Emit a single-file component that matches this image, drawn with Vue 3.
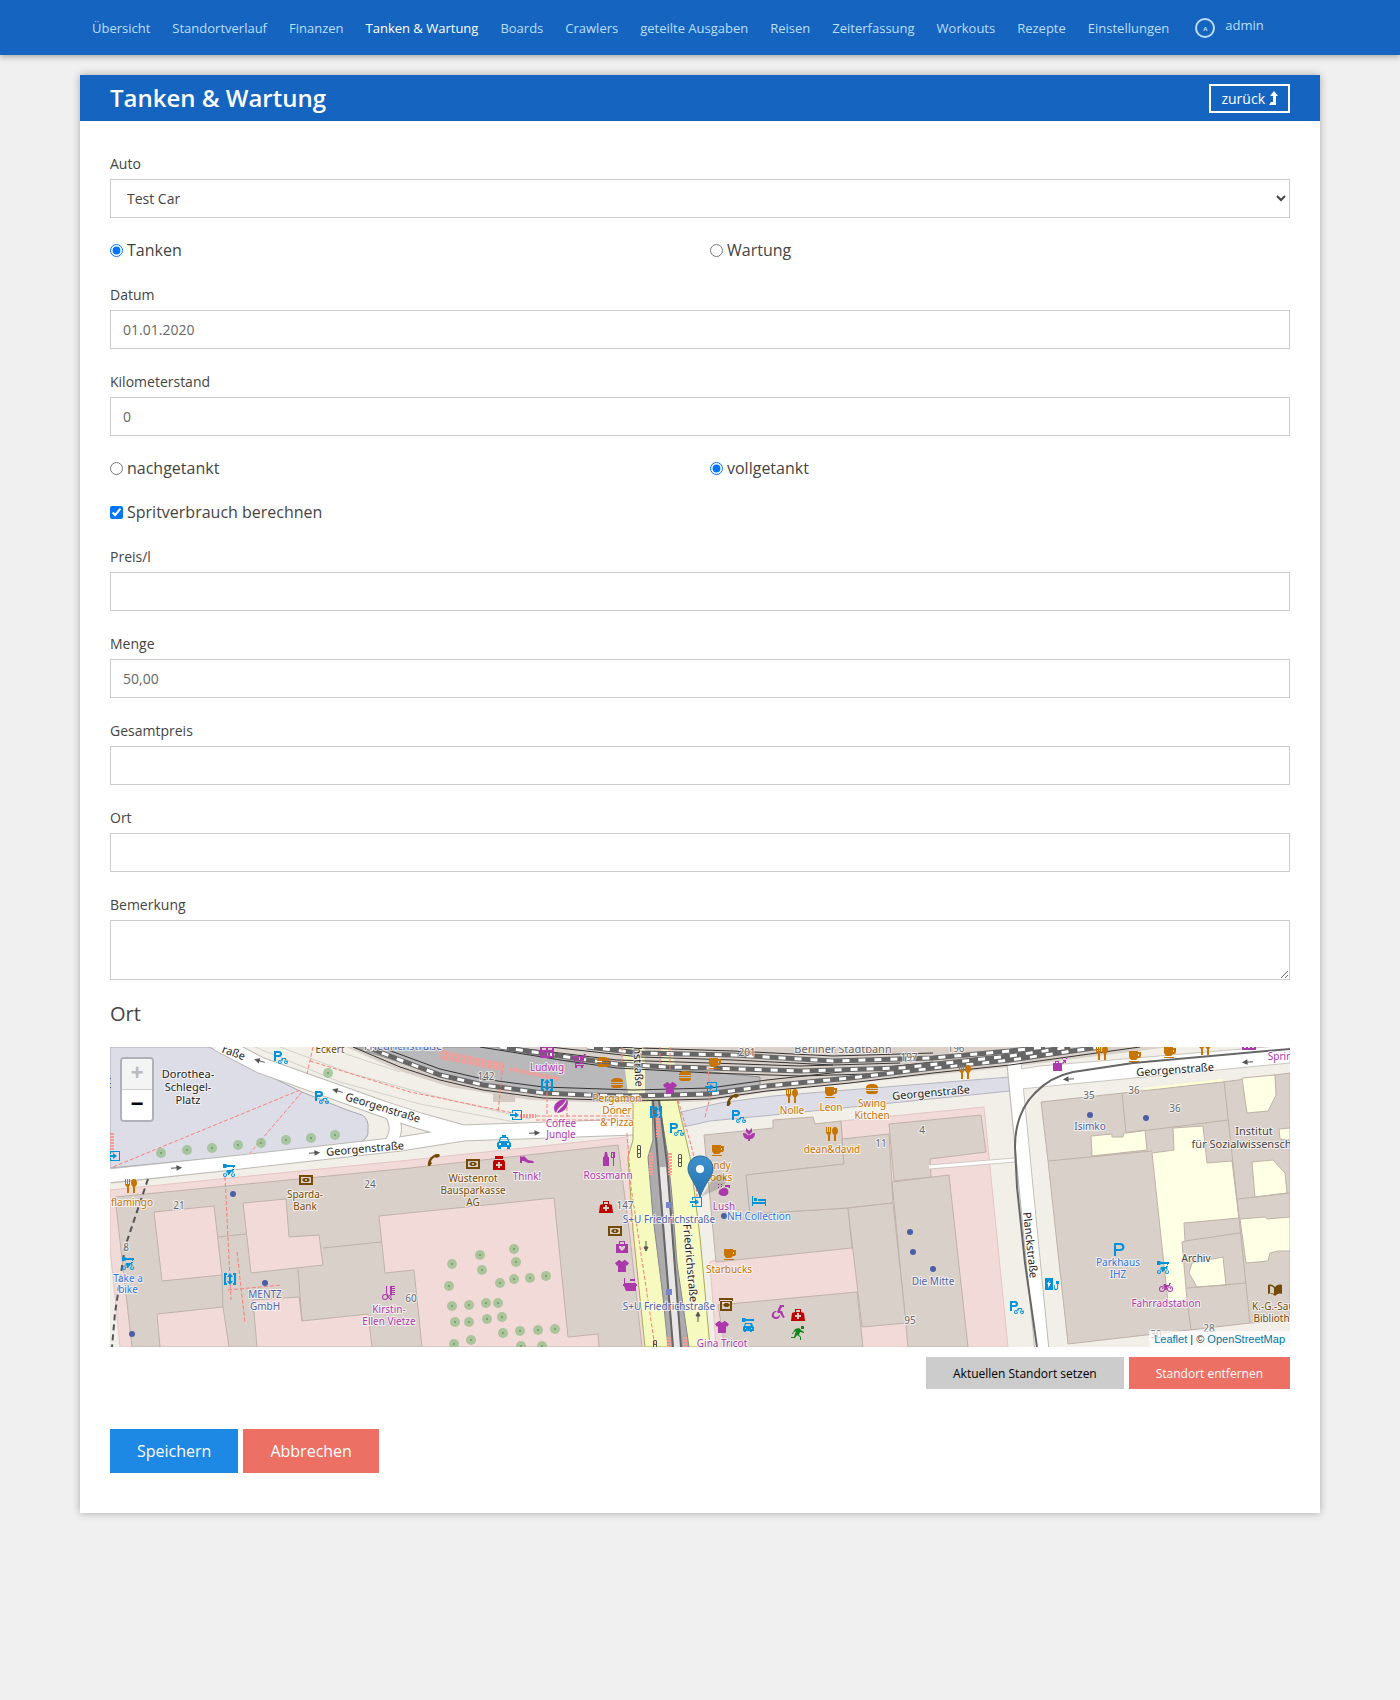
<script setup>
import { reactive } from 'vue'

const navItems = [
  'Übersicht', 'Standortverlauf', 'Finanzen', 'Tanken & Wartung', 'Boards', 'Crawlers', 'geteilte Ausgaben',
  'Reisen', 'Zeiterfassung', 'Workouts', 'Rezepte', 'Einstellungen',
]
const active = 'Tanken & Wartung'

const form = reactive({
  car: 'Test Car', type: 'fuel', date: '01.01.2020', mileage: '0', fill: 'full',
  calc: true, price: '', volume: '50,00', total: '', place: '', notice: '',
})
const topFields = [['date', 'Datum'], ['mileage', 'Kilometerstand']]
const fuelFields = [['price', 'Preis/l'], ['volume', 'Menge'], ['total', 'Gesamtpreis'], ['place', 'Ort']]

// Map palette
const O = '#c77400', S = '#ac39ac', T = '#0092da', H = '#bf0000', B = '#734a08', F = '#4d62a8', L = '#2f73e0', N = '#666', K = '#222'

const ring = (x, y, r) =>
  `M${x - r} ${y}a${r} ${r} 0 1 0 ${2 * r} 0a${r} ${r} 0 1 0 ${-2 * r} 0zM${x - r + 1} ${y}a${r - 1} ${r - 1} 0 1 1 ${2 * r - 2} 0a${r - 1} ${r - 1} 0 1 1 ${2 - 2 * r} 0z`

// Glyphs on a 14 x 14 grid, filled with the even-odd rule
const glyphs = {
  fork: 'M1 0h1v5h1V0h1v5h1V0h1v6l-1 2v6H3V8L1 6zM10 0c2 0 3 2 3 4s-1 3-2 4v6H9V8C8 7 7 6 7 4s1-4 3-4z',
  cup: 'M1 2h9v1h3v4l-1 2h-2l-2 2H3L1 8zM10 5v2h1V5zM1 12h10v1H1z',
  burger: 'M1 6c0-3 2-4 6-4s6 1 6 4zM1 7h12v1H1zM1 9h12c0 2-1 3-3 3H4c-2 0-3-1-3-3z',
  phone: 'M9 1l3 0 1 2-3 2-2-1C6 5 4 7 4 9l1 1-2 3-2 0C0 9 3 3 9 1z',
  bank: 'M0 2h14v10H0zM2 4v6h10V4zM3 7l2-2h4l2 2-2 2H5zM7 6a1 1 0 1 0 0 2a1 1 0 1 0 0-2z',
  atm: 'M0 0h14v3h-1V2H1v1H0zM1 3h12v10H1zM3 4v7h8V4zM4 7l2-2h3l2 2-2 2H6z',
  parkbike: 'M0 0h5c4 0 4 6 0 6H2v4H0zM2 2v2h3c1 0 1-2 0-2zM6 11l2-4h4v1l1 3h-1l-1-3H9l-1 3z' + ring(6, 11, 2) + ring(12, 11, 2),
  bike: 'M3 9l2-5h2v1l3 0V3h2v1h-1l1 5h-1l-1-3-3 4H6L5 6 4 9z' + ring(3, 9, 3) + ring(11, 9, 3),
  sharebike: 'M1 0h3l1 1h8v2h-1v1h-1V3H5L4 4H1zM3 10l2-4h5V5h2v1h-1l1 4h-1l-1-3-3 4H6L5 7l-1 3z' + ring(3, 11, 2) + ring(11, 11, 2),
  lift: 'M1 1h3v2H3v8h1v2H1zM13 1h-3v2h1v8h-1v2h3zM7 1l3 4H8v4h2l-3 4-3-4h2V5H4z',
  entrance: 'M3 2h10v10H3v-3h1v2h8V3H4v2H3zM6 4l4 3-4 3V8H1V6h5z',
  taxi: 'M5 0h4v2h2l1 4 2 2v4h-1v2h-3v-2H4v2H1v-2H0V8l2-2 1-4h2zM4 3L3 6h8l-1-3zM2 8v2h2V8zM10 8v2h2V8z',
  pharmacy: 'M3 0h8v3H3zM2 4h10l1 2v8H1V6zM6 6v2H4v2h2v2h2v-2h2V8H8V6z',
  shoe: 'M0 3l2 1 2-1 4 4 5 1 1 2H8L4 8 2 8v2H0z',
  cosmetics: 'M3 0h2l1 5h1v9H1V5h1zM9 0h4v6h-1v8h-1V6H9zM10 1v4h1V1z',
  hair: 'M8 0h5v1h-3v1h3v1h-3v1h3v1h-3v1h3v1h-3v1h3v1h-3v5H8zM4 0h1v7l2 3H6L4 7z' + ring(3, 11, 3) + ring(8, 11, 2),
  aid: 'M4 1h6v3l3 1 1 8H0L1 5l3-1zM5 2v2h4V2zM6 5v2H4v2h2v2h2V9h2V7H8V5z',
  shirt: 'M4 1h1c1 2 3 2 4 0h1l4 3-2 3-1-1v7H3V6L2 7 0 4z',
  gift: 'M4 4V1h6v3h3v9H1V4zM5 4h4V2H5zM7 11L4 8V6h2l1 1 1-1h2v2z',
  pot: 'M1 0h1v5h11v1h1v2h-1v5H3L1 8H0V6h1zM7 1h5v2H7z',
  bean: 'M13 0c3 5-2 14-10 14C6 8 11 8 13 0zM12 0C6 0 0 4 0 9c0 2 1 4 2 5C4 7 10 7 12 0z',
  flower: 'M4 1l3 3 3-3v4l-3 3-3-3zM1 6c3 0 5 1 5 4V7h2v3c0-3 2-4 5-4 0 4-2 6-5 6v2H6v-2C3 12 1 10 1 6z',
  bed: 'M0 2h1v6h12V5h1v7h-1v-2H1v2H0zM2 4h3v3H2zM6 5h7v2H6z',
  carshare: 'M1 0h3l1 1h8v2H5L4 4H1zM4 5h7l1 3 1 1v4h-2v1H9v-1H5v1H3v-1H2V9l1-1zM5 6L4 8h6l-1-2zM4 10v1h1v-1zM10 10v1h1v-1z',
  wheelchair: 'M9 0h4v2h-2L9 6h2l2 5 1 1-2 1-3-5H7L6 7l2-5zM4 6h2L5 7c-3 1-3 5 0 5 2 0 3-1 3-2h1c0 3-2 4-4 4C0 14-1 8 4 6z',
  run: 'M10 0h3v3h-3zM4 3l4-1 2 2 3 2v1l-4-1-1 3 2 2v3H9v-3L6 9l-2 3H0v-1h3l2-6-2 1-1 2H1z',
  charge: 'M0 1h8v12H0zM5 3L2 7h1v4l3-5H4zM9 8c2 0 0 4 2 4s1-4 1-5h-1V4h3v3h-1c0 2 1 6-2 6-3 1-1-4-2-4z',
  book: 'M0 2c3-1 5 0 7 2 2-2 4-3 7-2v9c-3-1-5 0-7 2-2-2-4-3-7-2zM2 3v7c2 0 3 0 4 1V5C5 4 4 3 2 3z',
  parking: 'M2 1h6c6 0 6 8 0 8H4v5H2zM4 3v4h4c3 0 3-4 0-4z',
  lights: 'M5 1l1-1h2l1 1v11l-1 1H6l-1-1zM6 1v3h2V1zM6 5v3h2V5zM6 9v3h2V9z',
  store: 'M0 1h14v12H0zM2 3v2h4V3zM8 3v2h4V3zM2 7v4h2V7zM6 7v4h2V7zM10 7v4h2V7z',
  cart: 'M14 0v1h-1l-2 9H4v1h8v1H3V9h7V7H2L0 2h11l1-2zM3 3l1 3h1V3zM7 3v3h1V3zM3 12h2v2H3zM9 12h2v2H9z',
  bag: 'M2 5V3h4v2h3v8H0V5zM3 4v1h2V4zM10 2h3v3h-1V4l-2 2-1-1 2-2h-1zM9 0h1v1H9zM13 0h1v1h-1z',
  lush: 'M6 5c6-2 8 8 1 8S0 7 6 5zM8 2h5v3h-1l-1-1H8zM1 1h1v1H1zM4 1h1v1H4zM1 4h1v1H1zM4 3h1v1H4z',
  swing: 'M0 12h10v1H0zM1 3h9v1H7v4h3v1H6V4H3v5h4v1H2V4H1z',
}

const icons = [
  ['swing', -2, 35, '#4863e0'], ['entrance', 4, 109, T], ['parkbike', 171, 11, T], ['parkbike', 212, 51, T], ['fork', 21, 139, O],
  ['sharebike', 119, 124, T], ['bank', 196, 133, B], ['sharebike', 18, 217, T], ['lift', 120, 232, T], ['hair', 279, 246, S],
  ['store', 437, 5, S], ['cart', 469, 14, S], ['burger', 493, 15, O], ['burger', 507, 36, O], ['burger', 575, 29, O], ['shirt', 560, 41, S],
  ['lift', 437, 38, T], ['bean', 451, 59, S], ['entrance', 406, 68, T], ['taxi', 394, 95, T], ['phone', 324, 113, B],
  ['bank', 363, 117, B], ['pharmacy', 389, 116, H], ['shoe', 417, 113, S], ['cosmetics', 499, 112, S], ['aid', 496, 160, H],
  ['bank', 505, 184, B], ['gift', 512, 200, S], ['shirt', 512, 219, S], ['pot', 520, 238, S], ['lift', 546, 65, T],
  ['parkbike', 567, 83, T], ['lights', 529, 105, '#555'], ['lights', 570, 114, '#555'], ['lights', 545, 300, '#555'], ['entrance', 586, 155, T],
  ['cup', 605, 16, O], ['entrance', 601, 40, T], ['phone', 623, 53, B], ['fork', 682, 49, O], ['cup', 721, 45, O], ['burger', 762, 42, O],
  ['fork', 855, 25, O], ['parkbike', 629, 70, T], ['flower', 639, 87, S], ['cup', 608, 103, O], ['fork', 722, 87, O],
  ['lush', 614, 143, S], ['bed', 649, 154, T], ['cup', 620, 207, O], ['atm', 616, 258, B], ['shirt', 612, 280, S],
  ['carshare', 638, 278, T], ['wheelchair', 668, 265, S], ['aid', 688, 268, H], ['run', 688, 286, '#0d8517'],
  ['bag', 950, 18, S], ['fork', 992, 6, O], ['cup', 1025, 9, O], ['cup', 1060, 5, O], ['fork', 1095, 1, O], ['store', 1139, -3, S],
  ['parking', 1009, 202, T], ['sharebike', 1053, 221, T], ['bike', 1056, 240, S], ['charge', 942, 237, T], ['parkbike', 907, 261, T],
  ['book', 1165, 243, B],
]

// [text, x, y, colour, size, rotation]
const labels = [
  ['Dorothea-', 78, 26, K, 11], ['Schlegel-', 78, 39, K, 11], ['Platz', 78, 52, K, 11],
  ['raße', 124, 5, K, 11, 20], ['Georgenstraße', 273, 60, K, 11, 17], ['Georgenstraße', 255, 101, K, 11, -5],
  ['Eckert', 220, 2, B], ['Friedrichstraße', 293, -2, F, 11], ['flamingo', 22, 155, O], ['Sparda-', 195, 147, B], ['Bank', 195, 159, B],
  ['24', 260, 137, N], ['21', 69, 158, N], ['8', 16, 200, N], ['Take a', 18, 231, L], ['bike', 18, 242, L],
  ['MENTZ', 155, 247, F], ['GmbH', 155, 259, F], ['Kirstin-', 279, 262, S], ['Ellen Vietze', 279, 274, S], ['60', 301, 251, N],
  ['Ludwig', 437, 20, S], ['142', 376, 29, N], ['Coffee', 451, 76, S], ['Jungle', 451, 87, S],
  ['Pergamon', 507, 51, O], ['Döner', 507, 63, O], ['& Pizza', 507, 75, O],
  ['Wüstenrot', 363, 131, B], ['Bausparkasse', 363, 143, B], ['AG', 363, 155, B], ['Think!', 417, 129, S], ['Rossmann', 498, 128, S],
  ['147', 515, 158, N], ['S+U Friedrichstraße', 559, 172, F], ['S+U Friedrichstraße', 559, 259, F],
  ['Friedrichstraße', 581, 216, K, 11, 85], ['hstraße', 529, 20, K, 11, 87], ['Gina Tricot', 612, 296, S],
  ['201', 637, 5, N], ['Berliner Stadtbahn', 733, 1, N, 11], ['197', 799, 10, N], ['196', 846, 1, N],
  ['Nolle', 682, 63, O], ['Leon', 721, 60, O], ['Swing', 762, 56, O], ['Kitchen', 762, 68, O], ['dean&david', 722, 102, O],
  ['Candy', 606, 118, O], ['Cooks', 608, 130, O], ['Lush', 614, 159, S], ['NH Collection', 649, 169, L], ['Starbucks', 619, 222, O],
  ['4', 812, 83, N], ['11', 771, 96, N], ['95', 800, 273, N], ['Die Mitte', 823, 234, F],
  ['Georgenstraße', 821, 45, K, 11, -5], ['Georgenstraße', 1065, 22, K, 11, -4], ['Planckstraße', 921, 198, K, 11, 84],
  ['35', 979, 48, N], ['36', 1024, 43, N], ['36', 1065, 61, N], ['Isimko', 980, 79, F], ['Institut', 1144, 83, '#444', 11],
  ['für Sozialwissenschaften', 1145, 96, '#444', 11], ['Archiv', 1086, 211, '#444'], ['Parkhaus', 1008, 215, L], ['IHZ', 1008, 227, L],
  ['Fahrradstation', 1056, 256, S], ['28', 1099, 281, N], ['30', 1046, 287, N], ['K.-G.-Saur-', 1167, 259, B], ['Bibliothek', 1167, 271, B],
  ['Springer', 1178, 9, S],
]

const trees = [
  [51, 106], [77, 103], [102, 101], [128, 98], [151, 96], [176, 93], [201, 91], [225, 88], [218, 26],
  [342, 217], [370, 208], [404, 202], [406, 215], [372, 223], [339, 239], [390, 236], [404, 232], [420, 231], [436, 229],
  [342, 259], [359, 258], [376, 256], [388, 256], [345, 275], [359, 275], [377, 272], [392, 270], [393, 286], [410, 284],
  [428, 283], [445, 282], [344, 297], [361, 293], [411, 299], [432, 299],
]
const dots = [[123, 147], [155, 236], [22, 287], [614, 169], [800, 185], [803, 205], [823, 222], [980, 68], [1036, 71]]

const pink = [
  '0,143 300,113 517,90 520,120 523,183 545,300 10,300 0,200',
  '731,74 874,60 898,300 606,300 600,215 738,161',
]
const buildings = [
  '5,150 300,121 508,98 520,190 532,300 22,300',
  '594,88 663,81 663,73 703,70 705,77 731,74 734,117 636,128 640,167 738,161 742,201 606,215',
  '732,92 779,87 783,156 738,161 640,167 636,128 734,117',
  '779,77 871,68 876,105 820,112 821,130 784,134',
  '782,135 839,128 858,300 798,300',
  '738,161 783,156 796,276 752,280',
  '608,258 747,245 753,300 615,300',
  '931,55 1113,35 1180,26 1180,273 1140,276 958,297 938,114',
]
const courts = [
  '44,165 104,159 112,228 52,234', '133,156 176,152 179,190 209,188 213,218 141,226',
  '47,267 113,260 119,300 50,300', '143,253 189,250 192,274 258,267 262,300 147,300',
  '269,169 444,151 458,290 488,287 489,300 312,300 304,223 275,226',
]
const school = [
  '981,89 1002,87 1002,90 1013,90 1014,86 1035,83 1037,103 982,109',
  '1063,81 1093,79 1097,116 1122,114 1129,171 1074,176 1075,194 1072,195 1077,253 1058,255 1042,106 1064,103',
  '1132,31 1165,28 1166,48 1158,64 1137,66', '1142,115 1163,113 1175,126 1177,146 1145,150',
  '1130,172 1155,170 1157,172 1180,170 1180,204 1168,204 1160,206 1158,214 1136,216',
  '1082,216 1113,210 1116,238 1087,240 1079,226', '1169,82 1180,81 1180,93 1170,92',
]
const walls = 'M107 190L136 187M213 201L271 195M188 222L192 274M112 228L113 260M1012 46L1016 86L1118 73M1114 34L1129 171L1140 276M938 114L1042 104M1075 194L1130 186M1077 241L1137 236M1128 152L1180 146M1077 253L1081 283'
const footways = 'M190 43L3 120M192 45L140 106M203 0L197 27M200 14L300 45L403 66M118 243L172 238M115 130L121 253M127 205L135 276M393 18L388 66M426 69H520M426 73H520M437 45V70M457 60V72M517 86L521 140L545 300M568 53L583 105L588 160M595 70L600 50L598 20M512 0V16M530 0V40M550 0V18M560 0V22'
const steps = 'M2 86V106M330 5L393 18M330 10L393 22M400 22L450 32M410 69H426M541 106V128M560 106V128M548 65V90M559 290V300M575 290V300'
const rails = [
  'M257 0L290 13L330 28L373 38L433 46L477 48L523 49L600 47L657 39L740 31L823 21L900 13L990 0',
  'M390 0L457 10L507 17L557 20L600 21L690 24L790 21L900 9L960 0',
  'M477 0L530 6L623 8L723 14L823 11L900 4L935 0',
]
const railEdges = 'M243 0L290 20L330 33L373 43L433 51L523 54L600 52L657 44L740 36L823 26L900 18L1030 0M270 0L330 22L373 32L433 40L523 43L600 41L657 33L823 15M400 0L507 13L600 16L690 19L790 16M370 0L457 14L507 21L600 26L690 29L790 26M500 0L623 4L723 9L823 6M440 0L530 10L623 13L723 18'
// One-way arrows: x, y, rotation
const arrows = [[150, 14, 196], [228, 44, 196], [66, 121, -4], [204, 106, -4], [424, 86, -3], [536, 199, 90], [588, 270, 270], [959, 32, 176], [1138, 15, 176]]
</script>

<template>
  <div class="page">
    <header class="topbar">
      <nav aria-label="Hauptmenü">
        <a v-for="item in navItems" :key="item" href="#" :class="{ active: item === active }">{{ item }}</a>
        <a href="#" class="profile"><span class="avatar">A</span><span class="user">admin</span></a>
      </nav>
    </header>

    <main class="card">
      <header class="card-head">
        <h1>Tanken &amp; Wartung</h1>
        <a href="#" class="back">zurück
          <svg width="9" height="14" viewBox="0 0 9 14" aria-hidden="true"><path d="M5 0l4 5H7v9H0l2-3h2V5H1z" fill="currentColor" /></svg>
        </a>
      </header>

      <form class="body" @submit.prevent>
        <div class="field">
          <label for="car">Auto</label>
          <select id="car" v-model="form.car"><option>Test Car</option></select>
        </div>
        <div class="choices">
          <label><input v-model="form.type" type="radio" name="type" value="fuel">Tanken</label>
          <label><input v-model="form.type" type="radio" name="type" value="service">Wartung</label>
        </div>
        <div v-for="[key, label] in topFields" :key="key" class="field">
          <label :for="key">{{ label }}</label>
          <input :id="key" v-model="form[key]" type="text">
        </div>
        <div class="choices">
          <label><input v-model="form.fill" type="radio" name="fill" value="part">nachgetankt</label>
          <label><input v-model="form.fill" type="radio" name="fill" value="full">vollgetankt</label>
        </div>
        <div class="choices">
          <label><input v-model="form.calc" type="checkbox">Spritverbrauch berechnen</label>
        </div>
        <div v-for="[key, label] in fuelFields" :key="key" class="field">
          <label :for="key">{{ label }}</label>
          <input :id="key" v-model="form[key]" type="text">
        </div>
        <div class="field">
          <label for="notice">Bemerkung</label>
          <textarea id="notice" v-model="form.notice"></textarea>
        </div>

        <section>
          <h2>Ort</h2>
          <div class="map">
            <svg class="tiles" viewBox="0 0 1180 300" preserveAspectRatio="xMidYMid slice" role="img" aria-label="Karte">
              <defs>
                <linearGradient id="pin" x1="0" y1="0" x2="0" y2="1">
                  <stop offset="0" stop-color="#3f92cf" /><stop offset="1" stop-color="#2470ad" />
                </linearGradient>
              </defs>
              <rect width="1180" height="300" fill="#f2efe9" />
              <polygon v-for="p in pink" :key="p" :points="p" fill="#f2dad9" stroke="#e3c6c4" />
              <path d="M0 0H99L192 45L237 63L252 68Q259 72 258 82Q259 92 250 95L137 108L0 121z" fill="#dddde8" stroke="#a9a9b0" />
              <path d="M573 80L567 66L610 56L663 49L900 30V44L663 68L600 74z" fill="#dddde8" stroke="#b5b5c0" />

              <g fill="none" stroke="#d5d1ca">
                <path d="M145 0L230 35L310 57L410 76M170 0L240 26L320 48L420 72M215 0L290 25" />
              </g>
              <path d="M236 0L290 24L340 40L420 53L530 57L600 54L657 45L900 20L1060 0z" fill="#d9d0c9" />
              <rect x="383" y="47" width="22" height="8" fill="#d3c9c1" />
              <path d="M243 0H385L450 13L590 24L650 30V38L570 48H480L400 42L330 28z" fill="#b9b9bb" stroke="#8f8f8f" />

              <g fill="none" stroke="#bdbab4">
                <path d="M108 -4L150 18L223 44L273 62L310 74L353 86L523 80" stroke-width="17" />
                <path d="M0 129L113 117L290 97L353 87" stroke-width="15" />
                <path d="M277 62Q292 80 280 96" stroke-width="13" />
                <path d="M904 18L932 304" stroke-width="15" />
              </g>
              <path d="M910 22L930 19L1180 -2V16L910 42z" fill="#fff" stroke="#c9c6c0" />
              <g fill="none" stroke="#fff">
                <path d="M108 -4L150 18L223 44L273 62L310 74L353 86L523 80" stroke-width="15" />
                <path d="M-2 129L113 117L290 97L353 87" stroke-width="13" />
                <path d="M277 62Q292 80 280 96" stroke-width="11" />
                <path d="M904 16L932 304" stroke-width="13" />
              </g>

              <g stroke="#bfb2a8">
                <polygon v-for="p in buildings" :key="p" :points="p" fill="#d9d0c9" />
                <polygon v-for="p in courts" :key="p" :points="p" fill="#f2dad9" />
                <polygon v-for="p in school" :key="p" :points="p" fill="#ffffe5" />
                <path :d="walls" fill="none" />
              </g>
              <path d="M1033 42L1113 33" stroke="#ffffd0" stroke-width="2" />
              <path d="M819 120L905 113" stroke="#cfcac4" stroke-width="5" />
              <path d="M819 120L905 113" stroke="#fff" stroke-width="3" />

              <path d="M523 53L523 93L518 110L523 183L535 300H600L590 190L580 110L567 53z" fill="#f7fabf" stroke="#a5ab55" />
              <path d="M512 0H535V46H518zM549 0H561L566 22H553z" fill="#f3f3c8" />
              <path d="M542 53H549L558 110L562 150L567 216L579 300H558L553 250L543 170L538 110L543 93z" fill="#acacae" stroke="#888" />
              <path d="M553 120L567 300" stroke="#e9e7e6" stroke-width="7" />
              <path d="M543 53L548 116L563 300M549 53L557 116L571 300" fill="none" stroke="#666" stroke-width="2" />

              <path :d="railEdges" fill="none" stroke="#333" />
              <g v-for="r in rails" :key="r" fill="none">
                <path :d="r" stroke="#666" stroke-width="5" />
                <path :d="r" stroke="#fff" stroke-width="3" stroke-dasharray="7 9" />
              </g>
              <path d="M1180 2L1023 16L963 25Q940 30 925 46Q905 66 905 100L907 140L915 216L927 300" fill="none" stroke="#666" stroke-width="2" />
              <path d="M38 132L15 200L5 266L2 300" fill="none" stroke="#555" stroke-width="2" stroke-dasharray="6 4" />
              <path :d="footways" fill="none" stroke="#fa7f78" stroke-dasharray="4 2" />
              <path :d="steps" fill="none" stroke="#f99a94" stroke-width="4" stroke-dasharray="2 1" />

              <g v-for="([x, y], i) in trees" :key="i">
                <circle :cx="x" :cy="y" r="5" fill="#8fbb82" fill-opacity=".7" /><circle :cx="x" :cy="y" r="1" fill="#6c9a60" />
              </g>
              <circle v-for="([x, y], i) in dots" :key="i" :cx="x" :cy="y" r="3" fill="#4a5fa5" />
              <rect x="556" y="155" width="6" height="6" fill="#7a85c8" /><rect x="556" y="242" width="6" height="6" fill="#7a85c8" />
              <path
                v-for="([x, y, a], i) in arrows" :key="i" :transform="`translate(${x} ${y}) rotate(${a})`"
                d="M-5 0H2M1 -2L5 0L1 2z" fill="#555" stroke="#555"
              />
              <g class="labels">
                <text
                  v-for="([t, x, y, c, s = 10, a = 0], i) in labels" :key="i"
                  :transform="`translate(${x} ${y}) rotate(${a})`" :fill="c" :font-size="s"
                >{{ t }}</text>
              </g>
              <path
                v-for="([k, x, y, c], i) in icons" :key="i" :d="glyphs[k]" :fill="c" fill-rule="evenodd"
                :transform="`translate(${x - 7} ${y - 7})`"
              />
              <path d="M591 150L603 132Q610 124 616 130Q618 137 608 142z" fill="#000" fill-opacity=".15" />
              <g transform="translate(578 109)">
                <path d="M12 0C5 0 0 6 0 13C0 20 8 27 12 41C17 27 25 20 25 13C25 6 20 0 12 0z" fill="url(#pin)" stroke="#2b6a9c" />
                <circle cx="12" cy="13" r="4" fill="#fff" />
              </g>
            </svg>
            <div class="zoom">
              <button type="button" disabled aria-label="Vergrößern">+</button>
              <button type="button" aria-label="Verkleinern">−</button>
            </div>
            <div class="credit"><a href="#">Leaflet</a> | © <a href="#">OpenStreetMap</a></div>
          </div>
          <div class="map-actions">
            <button type="button" class="btn grey">Aktuellen Standort setzen</button>
            <button type="button" class="btn red">Standort entfernen</button>
          </div>
        </section>

        <div class="actions">
          <button type="submit" class="btn blue">Speichern</button>
          <button type="button" class="btn red">Abbrechen</button>
        </div>
      </form>
    </main>
  </div>
</template>

<style>
body { margin: 0; background: #f0f0f0; }
</style>

<style scoped>
.page, .page * { box-sizing: border-box; }
.page { font-family: "Open Sans", "Noto Sans", sans-serif; color: #444; padding-bottom: 40px; }
a { text-decoration: none; }

.topbar { background: #1565c0; box-shadow: 0 2px 6px rgba(0, 0, 0, .3); }
nav { max-width: 1240px; min-height: 55px; margin: 0 auto; padding: 0 12px; display: flex; flex-wrap: wrap; align-items: center; column-gap: 22px; font-size: 13px; line-height: 20px; white-space: nowrap; }
nav a { color: #bbdefb; }
nav a.active { color: #fff; font-weight: 500; }
.profile { display: flex; gap: 10px; margin-left: 4px; }
.avatar { width: 20px; height: 20px; border: 2px solid; border-radius: 50%; font-size: 6px; font-weight: 700; line-height: 18px; text-align: center; }
.user { line-height: 14px; }

.card { max-width: 1240px; margin: 20px auto 0; background: #fff; box-shadow: 0 0 8px rgba(0, 0, 0, .3); }
.card-head { min-height: 46px; padding: 0 30px; display: flex; align-items: center; justify-content: space-between; background: #1565c0; color: #fff; }
h1 { margin: 0; font-size: 24px; font-weight: 600; line-height: 32px; }
.back { display: flex; align-items: center; gap: 4px; height: 29px; padding: 0 10px; border: 2px solid #fff; color: #fff; font-size: 14px; font-weight: 500; }

.body { padding: 30px 30px 40px; display: flex; flex-direction: column; gap: 20px; }
.field { display: flex; flex-direction: column; gap: 2px; font-size: 14px; line-height: 26px; }
.field input, select, textarea { width: 100%; height: 39px; margin: 0; padding: 0 12px; border: 1px solid #ccc; border-radius: 0; background: #fff; color: #666; font: inherit; }
select { color: #444; }
textarea { display: block; height: 60px; resize: vertical; }
.choices { display: grid; grid-template-columns: 1fr 1fr; gap: 20px; font-size: 16px; line-height: 24px; }
.choices label { display: flex; align-items: center; gap: 4px; }
.choices input { width: 13px; height: 13px; margin: 0; }

h2 { margin: 0 0 19px; font-size: 20px; font-weight: 500; line-height: 28px; }
.map { position: relative; height: 300px; overflow: hidden; background: #ddd; }
.tiles { display: block; width: 100%; height: 100%; }
.labels { font-family: "Noto Sans", sans-serif; text-anchor: middle; dominant-baseline: central; paint-order: stroke; stroke: rgba(255, 255, 255, .7); stroke-width: 2px; stroke-linejoin: round; }
.zoom { position: absolute; top: 10px; left: 10px; display: flex; flex-direction: column; border: 2px solid rgba(0, 0, 0, .2); border-radius: 4px; background-clip: padding-box; }
.zoom button { width: 30px; height: 30px; padding: 0; border: 0; border-radius: 0 0 2px 2px; background: #fff; color: #000; font: bold 22px/32px "Liberation Mono", monospace; }
.zoom button:first-child { height: 31px; border-bottom: 1px solid #ccc; border-radius: 2px 2px 0 0; }
.zoom button:disabled { background: #f4f4f4; color: #bbb; }
.credit { position: absolute; right: 0; bottom: 0; padding: 0 5px; background: rgba(255, 255, 255, .7); color: #333; font: 11px/16px "Liberation Sans", Arial, sans-serif; }
.credit a { color: #0078a8; }

.btn { border: 0; border-radius: 0; font: inherit; color: #fff; }
.grey { background: #ccc; color: #000; }
.red { background: #ec7063; }
.blue { background: #1e88e5; }
.map-actions { margin-top: 10px; display: flex; flex-wrap: wrap; justify-content: flex-end; gap: 5px; font-size: 12px; }
.map-actions .btn { height: 32px; padding: 0 27px; }
.actions { margin-top: 20px; display: flex; gap: 5px; font-size: 16px; }
.actions .btn { height: 44px; padding: 0 27px; }
</style>
